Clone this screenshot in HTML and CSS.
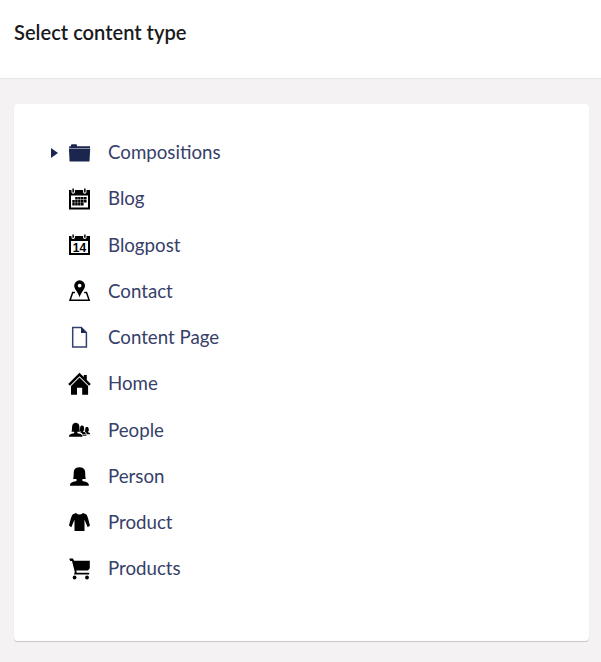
FILE: index.html
```html
<!DOCTYPE html>
<html lang="en">
<head>
<meta charset="utf-8">
<title>Select content type</title>
<link rel="stylesheet" href="styles.css">
</head>
<body>
<header class="header"><h1 class="title">Select content type</h1></header>
<main class="panel">
<ul class="tree">
<li class="row"><span class="caret"></span><svg class="icon navy" viewBox="0 0 24 24"><path d="M3 5.200V4.200q0-1 1-1h4q1 0 1 1v1H22V7H1.200V5.200zM.9 7.600H22.200l-.7 13H1.600z"/></svg><span class="label">Compositions</span></li>
<li class="row"><svg class="icon" viewBox="0 0 24 24"><path fill-rule="evenodd" d="M1 3h2.500v2.500q1.700 2.500 3.400 0V3h8.200v2.500q1.700 2.500 3.400 0V3H22v19.500H1zM3 8.500v12h17v-12z"/><path d="M4.400 1.500h1.500v4H4.400zM16.100 1.500h1.500v4h-1.500z"/><path fill="none" stroke="#000" stroke-width="2.600" stroke-dasharray="2.500 .4" d="M7.200 11.300H19M4.300 14.200H19M4.300 17.100H16"/></svg><span class="label">Blog</span></li>
<li class="row"><svg class="icon" viewBox="0 0 24 24"><path fill-rule="evenodd" d="M1 3h2.500v2q1.700 2 3.400 0V3h8.200v2q1.700 2 3.400 0V3H22v19H1zM3 8v12h17V8z"/><path d="M4.400 1.500h1.500v3.300H4.400zM16.100 1.500h1.500v3.300h-1.500z"/><text class="date" x="11.500" y="18.500" text-anchor="middle">14</text></svg><span class="label">Blogpost</span></li>
<li class="row"><svg class="icon" viewBox="0 0 24 24"><path fill-rule="evenodd" d="M11.600 1.300a5.400 5.400 0 0 1 5.400 5.400c0 3.500-3.700 6-5.400 11.500C9.900 12.700 6.200 10.200 6.200 6.700a5.400 5.400 0 0 1 5.400-5.400zm0 3.400a1.900 1.900 0 1 0 0 3.800 1.900 1.900 0 0 0 0-3.800z"/><path fill="none" stroke="#000" stroke-width="1.500" d="M7 13.600H4.700L2 21.300H21.200L18.500 13.600H16.200"/></svg><span class="label">Contact</span></li>
<li class="row"><svg class="icon navy" viewBox="0 0 24 24"><path fill="none" stroke="#34406f" stroke-width="1.500" d="M4.700 2.400H13.300L18.400 7.500V21.900H4.700z"/><path d="M13 2l5.500 6H13z"/></svg><span class="label">Content Page</span></li>
<li class="row"><svg class="icon" viewBox="0 0 24 24"><path d="M11.500 .7l4.300 4.200V3h3v4.900l4 4-1.700 1.800-9.600-9.400-9.600 9.400L.2 11.900z"/><path d="M11.500 5.600l8.600 8.400v8.800h-5.900v-7H9v7H3V14z"/></svg><span class="label">Home</span></li>
<li class="row"><svg class="icon" viewBox="0 0 24 24"><path d="M1 18.700c0-2 .9-2.800 5.200-3.500v-1.500H3.500c.8-2 .3-4 .8-6.200.7-3.800 6.100-3.800 6.900-.1.500 2.200 0 4.300.8 6.300H9.400v1.500c3.900.6 5 1.500 5 3.500z"/><path d="M12.200 9c.4-2 3.300-2 3.700 0l.4 3.700h-1.200v1c1.700.3 2.700.8 2.700 2.400h-3.400c-.3-.8-1-1.200-2-1.500V13l-.6-.3zM17.300 10.300c.3-1.800 2.900-1.800 3.300 0l.3 2.900h-1v1c1.500.3 2.300.8 2.300 2h-3.600v-1.300l-1.600-.9v-.8h.2z"/><path d="M14.400 16.500h4v1.200h-4z"/></svg><span class="label">People</span></li>
<li class="row"><svg class="icon" viewBox="0 0 24 24"><path d="M2 21.700c0-2.700 1.300-3.700 6.500-4.700v-2H5.100c1-2.800.3-5.600.9-8.400.9-4.600 10-4.600 10.900 0 .6 2.800 0 5.600.9 8.400h-3.400v2c5.300 1 6.500 2 6.500 4.700z"/></svg><span class="label">Person</span></li>
<li class="row"><svg class="icon" viewBox="0 0 24 24"><path d="M8 3q3.500 3 7 0l3 1.200c1.500.9 2.500 5.600 4 11.400l-2.300 1.600-3.200-7.400V20.900h-10V9.800l-3.200 7.400L1 15.600c1.500-5.800 2.500-10.500 4-11.400z"/></svg><span class="label">Product</span></li>
<li class="row"><svg class="icon" viewBox="0 0 24 24"><path d="M1.400 1.600h3.500l1.300 2.100h15.600v7.500L20 13.500H8.300l.4 2.200h12.500v1.900H6L6.800 15 4 4H2.300q-.9-1.200-.9-2.400z"/><circle cx="6.600" cy="20.500" r="1.900"/><circle cx="19" cy="20.500" r="1.900"/></svg><span class="label">Products</span></li>
</ul>
</main>
</body>
</html>
```
FILE: styles.css
```css
* { box-sizing: border-box; }
body {
  margin: 0;
  min-height: 662px;
  background: #f4f2f3;
  font-family: Lato, "Liberation Sans", sans-serif;
}
.header {
  height: 79px;
  padding: 20px 14px 0;
  background: #fff;
  border-bottom: 1px solid #e6e5e7;
}
.title {
  margin: 0;
  font-size: 20.1px;
  line-height: 25px;
  font-weight: 600;
  color: #1a1a1c;
}
.panel {
  margin: 25px 12px 0 14px;
  height: 537px;
  padding: 25.5px 0 0 36px;
  background: #fff;
  border-radius: 4px;
  box-shadow: 0 1px 1px rgba(0, 0, 0, .18);
}
.tree { margin: 0; padding: 0; list-style: none; }
.row {
  display: flex;
  align-items: center;
  height: 46.22px;
  padding-left: 18px;
}
.row:has(.caret) { padding-left: 1px; }
.caret {
  width: 7px;
  margin-right: 10px;
  border: solid transparent;
  border-width: 5px 0 5px 7px;
  border-left-color: #1b264f;
}
.icon { width: 24px; height: 24px; fill: #000; }
.navy { fill: #1b264f; }
.date { font: 700 12px "Liberation Sans", sans-serif; }
.label {
  margin-left: 16px;
  padding-top: .16px;
  font-size: 18.7px;
  line-height: 25px;
  color: #364069;
}
```
